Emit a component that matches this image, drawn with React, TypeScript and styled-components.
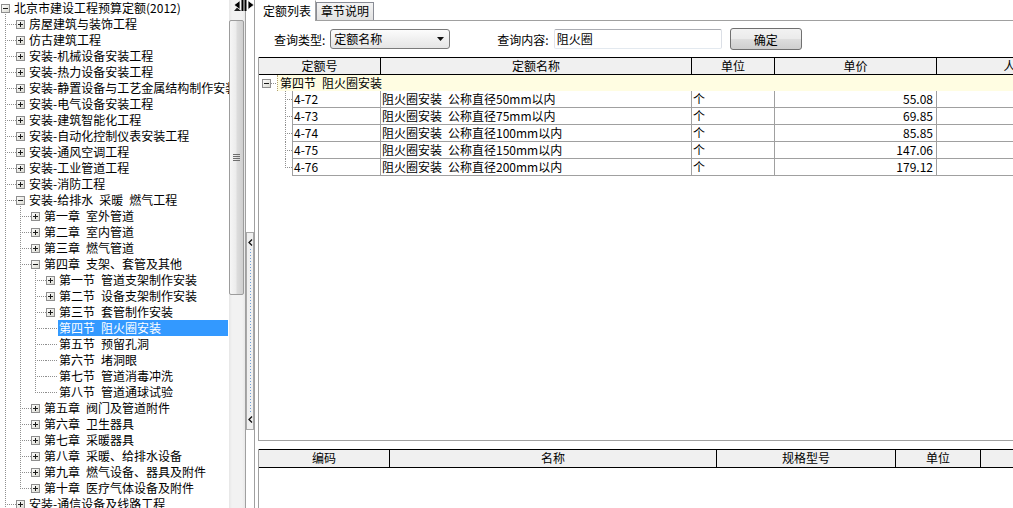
import React from 'react';
import styled, { createGlobalStyle, css } from 'styled-components';

const GlobalStyle = createGlobalStyle`
  *, *::before, *::after { box-sizing: border-box; }
  html, body { margin: 0; padding: 0; background: #fff; }
  body {
    font-family: "Noto Sans CJK SC", "Noto Sans", sans-serif;
    font-size: 12px;
    color: #000;
  }
`;

const DOT = '#8f8f8f';

type Seg = { d: 'v' | 'h'; x: number; y: number; len: number };

const dotBg = (segs: Seg[]) => {
  if (!segs.length) return '';
  const imgs = segs
    .map((s) => `repeating-linear-gradient(${s.d === 'v' ? 'to bottom' : 'to right'}, ${DOT} 0 1px, transparent 1px 2px)`)
    .join(', ');
  const sizes = segs.map((s) => (s.d === 'v' ? `1px ${s.len}px` : `${s.len}px 1px`)).join(', ');
  const pos = segs.map((s) => `${s.x}px ${s.y}px`).join(', ');
  return `background-image: ${imgs}; background-size: ${sizes}; background-position: ${pos}; background-repeat: no-repeat;`;
};

/* ---------- layout ---------- */

const Window = styled.div`
  position: relative;
  display: flex;
  width: 1013px;
  height: 508px;
  overflow: hidden;
  background: #fff;
`;

const TreePane = styled.div`
  flex: none;
  display: flex;
  width: 246px;
  height: 100%;
  border-right: 1px solid #a0a0a0;
`;

const TreeList = styled.div`
  flex: none;
  width: 229px;
  height: 100%;
  overflow: hidden;
`;

const TreeRow = styled.div`
  display: flex;
  height: 16px;
  padding-left: 1px;
`;

const GuideCell = styled.span<{ $segs: Seg[] }>`
  flex: none;
  width: 15px;
  height: 16px;
  ${(p) => dotBg(p.$segs)}
`;

const NodeCell = styled.span<{ $segs: Seg[] }>`
  flex: none;
  display: flex;
  align-items: flex-start;
  width: 12px;
  height: 16px;
  padding-top: 4px;
  ${(p) => dotBg(p.$segs)}
  svg { display: block; }
`;

const NodeLabel = styled.span<{ $sel?: boolean }>`
  flex: 1;
  min-width: 0;
  height: 16px;
  line-height: 16px;
  padding-left: 1px;
  white-space: nowrap;
  overflow: hidden;
  ${(p) =>
    p.$sel &&
    css`
      background: #3399ff;
      color: #fff;
      margin-right: 1px;
    `}
`;

const VScroll = styled.div`
  flex: none;
  width: 16px;
  height: 100%;
  display: flex;
  flex-direction: column;
  background: linear-gradient(to right, #e6e6e6, #f2f2f2 3px, #f2f2f2 13px, #e9e9e9);
`;

const ScrollArrow = styled.div`
  flex: none;
  height: 17px;
  display: flex;
  align-items: center;
  justify-content: center;
`;

const Thumb = styled.div`
  flex: none;
  margin-top: 3px;
  width: 15px;
  height: 275px;
  border: 1px solid #9c9c9c;
  border-radius: 2px;
  background: linear-gradient(to right, #f6f6f6, #ececec 45%, #dcdcdc 55%, #cfcfcf);
  display: flex;
  align-items: center;
  justify-content: center;
`;

const Splitter = styled.div`
  flex: none;
  width: 9px;
  height: 100%;
  border-right: 1px solid #a0a0a0;
  padding-top: 232px;
`;

const SplitHandle = styled.div`
  width: 8px;
  height: 198px;
  border: 1px solid #a8a8a8;
  background: #f0f0f0;
  display: flex;
  flex-direction: column;
  align-items: center;
  padding: 6px 0 6px;
  gap: 3px;
`;

const SplitDots = styled.div`
  flex: 1;
  width: 1px;
  background: repeating-linear-gradient(to bottom, #6f9fd8 0 1px, transparent 1px 3px);
`;

const RightPane = styled.div`
  flex: 1;
  min-width: 0;
  height: 100%;
  display: flex;
  flex-direction: column;
  padding-left: 3px;
`;

const TabBar = styled.div`
  flex: none;
  display: flex;
  align-items: flex-end;
  height: 21px;
  border-bottom: 1px solid #a0a0a0;
`;

const Tab = styled.div<{ $active?: boolean }>`
  flex: none;
  padding: 0 4px;
  white-space: nowrap;
  border: 1px solid #a0a0a0;
  border-bottom: none;
  ${(p) =>
    p.$active
      ? css`
          height: 21px;
          line-height: 19px;
          margin-bottom: -1px;
          background: #fff;
          border-color: #fff #a0a0a0 #fff #fff;
        `
      : css`
          height: 18px;
          line-height: 16px;
          background: linear-gradient(#f4f4f4, #e2e2e2);
          border-color: #898c95;
        `}
`;

const QueryBar = styled.div`
  flex: none;
  height: 36px;
  display: flex;
  align-items: center;
  padding-left: 16px;
`;

const QLabel = styled.span<{ $gap?: number }>`
  margin-left: ${(p) => p.$gap ?? 0}px;
  white-space: nowrap;
`;

const Select = styled.div`
  margin-left: 5px;
  width: 120px;
  height: 20px;
  border: 1px solid #7a7a7a;
  border-radius: 3px;
  background: linear-gradient(#fcfcfc, #f0f0f0 50%, #e5e5e5);
  display: flex;
  align-items: center;
  justify-content: space-between;
  padding: 0 5px 0 3px;
  line-height: 18px;
`;

const TextInput = styled.div`
  margin-left: 5px;
  width: 168px;
  height: 20px;
  border: 1px solid;
  border-color: #abadb3 #dbdfe6 #e3e9ef #e2e3ea;
  border-radius: 2px;
  padding-left: 2px;
  line-height: 18px;
  background: #fff;
`;

const Button = styled.div`
  margin-left: 8px;
  width: 72px;
  height: 22px;
  border: 1px solid #707070;
  border-radius: 3px;
  background: linear-gradient(#f2f2f2 0%, #ebebeb 48%, #dddddd 52%, #cfcfcf 100%);
  display: flex;
  align-items: center;
  justify-content: center;
`;

const TopGrid = styled.div`
  flex: none;
  height: 384px;
  border-left: 1px solid #a0a0a0;
  border-bottom: 1px solid #a0a0a0;
  overflow: hidden;
`;

const BottomGrid = styled.div`
  flex: 1;
  margin-top: 8px;
  border-left: 1px solid #a0a0a0;
  overflow: hidden;
`;

const HeadRow = styled.div<{ $h: number }>`
  display: flex;
  height: ${(p) => p.$h}px;
  margin-left: -1px;
  border: 1px solid #000;
  border-right: none;
  background: #f0f0f0;
`;

const HeadCell = styled.div<{ $w: number }>`
  flex: none;
  width: ${(p) => p.$w}px;
  border-right: 1px solid #000;
  text-align: center;
  line-height: 16px;
  white-space: nowrap;
  overflow: hidden;
`;

const GroupRow = styled.div`
  display: flex;
  height: 16px;
`;

const GroupIndent = styled.span`
  flex: none;
  width: 18px;
  height: 16px;
  padding: 4px 0 0 3px;
  ${dotBg([{ d: 'h', x: 12, y: 8, len: 6 }])}
  svg { display: block; }
`;

const GroupLabel = styled.span`
  flex: 1;
  background: #fffde2;
  border-left: 1px dotted #b0a070;
  padding-left: 2px;
  line-height: 16px;
  white-space: nowrap;
`;

const DataRow = styled.div`
  display: flex;
  height: 17px;
`;

const CodeCell = styled.div`
  flex: none;
  display: flex;
  width: 122px;
`;

const TreeIndent = styled.span<{ $last?: boolean }>`
  flex: none;
  width: 33px;
  height: 17px;
  ${(p) =>
    dotBg([
      { d: 'v', x: 26, y: 0, len: p.$last ? 9 : 17 },
      { d: 'h', x: 26, y: 8, len: 7 },
    ])}
`;

const Cell = styled.div<{ $w?: number; $right?: boolean; $left?: boolean }>`
  flex: ${(p) => (p.$w ? 'none' : '1')};
  width: ${(p) => (p.$w ? `${p.$w}px` : 'auto')};
  height: 17px;
  border-right: 1px solid #a0a0a0;
  border-bottom: 1px solid #a0a0a0;
  ${(p) => p.$left && 'border-left: 1px solid #a0a0a0;'}
  padding: ${(p) => (p.$right ? '0 3px 0 0' : '0 0 0 1px')};
  text-align: ${(p) => (p.$right ? 'right' : 'left')};
  line-height: 16px;
  white-space: nowrap;
  overflow: hidden;
`;

const CursorLayer = styled.svg`
  position: absolute;
  left: 233px;
  top: 0;
`;

/* ---------- icons ---------- */

const ExpandBox = ({ open }: { open: boolean }) => (
  <svg width="9" height="9" viewBox="0 0 9 9">
    <defs>
      <linearGradient id="eb" x1="0" y1="0" x2="1" y2="1">
        <stop offset="0" stopColor="#ffffff" />
        <stop offset="1" stopColor="#d8d8d0" />
      </linearGradient>
    </defs>
    <rect x="0.5" y="0.5" width="8" height="8" fill="url(#eb)" stroke="#8e8e8e" />
    <path d="M2 4.5h5" stroke="#1a1a1a" />
    {!open && <path d="M4.5 2v5" stroke="#1a1a1a" />}
  </svg>
);

const UpArrow = () => (
  <svg width="7" height="4" viewBox="0 0 7 4">
    <path d="M0 4L3.5 0L7 4Z" fill="#222" />
  </svg>
);

const Grip = () => (
  <svg width="7" height="7" viewBox="0 0 7 7">
    <path d="M0 0.5h7M0 2.5h7M0 4.5h7M0 6.5h7" stroke="#6e6e6e" />
  </svg>
);

const Chevron = () => (
  <svg width="5" height="7" viewBox="0 0 5 7">
    <path d="M4 0.5L1 3.5L4 6.5" stroke="#111" fill="none" strokeWidth="1.3" />
  </svg>
);

const DropArrow = () => (
  <svg width="7" height="4" viewBox="0 0 7 4">
    <path d="M0 0H7L3.5 4Z" fill="#111" />
  </svg>
);

const ResizeCursor = () => (
  <CursorLayer width="23" height="11" viewBox="0 0 23 11">
    <path d="M1 5L7 0.5V9.5Z" fill="#000" stroke="#fff" strokeWidth="0.8" />
    <rect x="8.5" y="0" width="2" height="11" fill="#000" />
    <rect x="11.5" y="0" width="2" height="11" fill="#000" />
    <path d="M21 5L15 0.5V9.5Z" fill="#000" stroke="#fff" strokeWidth="0.8" />
  </CursorLayer>
);

/* ---------- data ---------- */

type TNode = { label: string; depth: number; box?: 'plus' | 'minus'; sel?: boolean };

const nodes: TNode[] = [
  { label: '北京市建设工程预算定额(2012)', depth: 0, box: 'minus' },
  { label: '房屋建筑与装饰工程', depth: 1, box: 'plus' },
  { label: '仿古建筑工程', depth: 1, box: 'plus' },
  { label: '安装-机械设备安装工程', depth: 1, box: 'plus' },
  { label: '安装-热力设备安装工程', depth: 1, box: 'plus' },
  { label: '安装-静置设备与工艺金属结构制作安装工程', depth: 1, box: 'plus' },
  { label: '安装-电气设备安装工程', depth: 1, box: 'plus' },
  { label: '安装-建筑智能化工程', depth: 1, box: 'plus' },
  { label: '安装-自动化控制仪表安装工程', depth: 1, box: 'plus' },
  { label: '安装-通风空调工程', depth: 1, box: 'plus' },
  { label: '安装-工业管道工程', depth: 1, box: 'plus' },
  { label: '安装-消防工程', depth: 1, box: 'plus' },
  { label: '安装-给排水 采暖 燃气工程', depth: 1, box: 'minus' },
  { label: '第一章 室外管道', depth: 2, box: 'plus' },
  { label: '第二章 室内管道', depth: 2, box: 'plus' },
  { label: '第三章 燃气管道', depth: 2, box: 'plus' },
  { label: '第四章 支架、套管及其他', depth: 2, box: 'minus' },
  { label: '第一节 管道支架制作安装', depth: 3, box: 'plus' },
  { label: '第二节 设备支架制作安装', depth: 3, box: 'plus' },
  { label: '第三节 套管制作安装', depth: 3, box: 'plus' },
  { label: '第四节 阻火圈安装', depth: 3, sel: true },
  { label: '第五节 预留孔洞', depth: 3 },
  { label: '第六节 堵洞眼', depth: 3 },
  { label: '第七节 管道消毒冲洗', depth: 3 },
  { label: '第八节 管道通球试验', depth: 3 },
  { label: '第五章 阀门及管道附件', depth: 2, box: 'plus' },
  { label: '第六章 卫生器具', depth: 2, box: 'plus' },
  { label: '第七章 采暖器具', depth: 2, box: 'plus' },
  { label: '第八章 采暖、给排水设备', depth: 2, box: 'plus' },
  { label: '第九章 燃气设备、器具及附件', depth: 2, box: 'plus' },
  { label: '第十章 医疗气体设备及附件', depth: 2, box: 'plus' },
  { label: '安装-通信设备及线路工程', depth: 1, box: 'plus' },
];

// list continues below the visible area with more depth-1 items
const depthAt = (j: number) => (j < nodes.length ? nodes[j].depth : 1);

const continues = (i: number, level: number) => {
  for (let j = i + 1; j <= nodes.length; j++) {
    const d = depthAt(j);
    if (d === level) return true;
    if (d < level) return false;
  }
  return false;
};

const sp = (s: string) => s.replace(/ /g, '\u2002');

const TreeItem = ({ n, i }: { n: TNode; i: number }) => {
  const guides: Seg[][] = [];
  for (let k = 0; k < n.depth; k++) {
    if (k < n.depth - 1) {
      guides.push(continues(i, k + 1) ? [{ d: 'v', x: 4, y: 0, len: 16 }] : []);
    } else {
      guides.push([
        { d: 'v', x: 4, y: 0, len: continues(i, n.depth) ? 16 : 8 },
        { d: 'h', x: 4, y: 8, len: 11 },
      ]);
    }
  }
  const nodeSegs: Seg[] = n.box
    ? n.box === 'minus'
      ? [{ d: 'v', x: 4, y: 8, len: 8 }]
      : []
    : [{ d: 'h', x: 0, y: 8, len: 12 }];
  return (
    <TreeRow>
      {guides.map((g, k) => (
        <GuideCell key={k} $segs={g} />
      ))}
      <NodeCell $segs={nodeSegs}>{n.box && <ExpandBox open={n.box === 'minus'} />}</NodeCell>
      <NodeLabel $sel={n.sel}>{sp(n.label)}</NodeLabel>
    </TreeRow>
  );
};

const topCols = [122, 311, 83, 162, 170];
const topHeads = ['定额号', '定额名称', '单位', '单价', '人工费'];
const bottomCols = [131, 327, 179, 85, 200];
const bottomHeads = ['编码', '名称', '规格型号', '单位', ''];

const quotas = [
  ['4-72', '阻火圈安装 公称直径50mm以内', '个', '55.08'],
  ['4-73', '阻火圈安装 公称直径75mm以内', '个', '69.85'],
  ['4-74', '阻火圈安装 公称直径100mm以内', '个', '85.85'],
  ['4-75', '阻火圈安装 公称直径150mm以内', '个', '147.06'],
  ['4-76', '阻火圈安装 公称直径200mm以内', '个', '179.12'],
];

export default function App() {
  return (
    <>
      <GlobalStyle />
      <Window>
        <TreePane>
          <TreeList>
            {nodes.map((n, i) => (
              <TreeItem key={i} n={n} i={i} />
            ))}
          </TreeList>
          <VScroll>
            <ScrollArrow>
              <UpArrow />
            </ScrollArrow>
            <Thumb>
              <Grip />
            </Thumb>
          </VScroll>
        </TreePane>

        <Splitter>
          <SplitHandle>
            <Chevron />
            <SplitDots />
            <Chevron />
          </SplitHandle>
        </Splitter>

        <RightPane>
          <TabBar>
            <Tab $active>定额列表</Tab>
            <Tab>章节说明</Tab>
          </TabBar>

          <QueryBar>
            <QLabel>查询类型:</QLabel>
            <Select>
              <span>定额名称</span>
              <DropArrow />
            </Select>
            <QLabel $gap={47}>查询内容:</QLabel>
            <TextInput>阻火圈</TextInput>
            <Button>确定</Button>
          </QueryBar>

          <TopGrid>
            <HeadRow $h={18}>
              {topHeads.map((h, i) => (
                <HeadCell key={i} $w={topCols[i]}>
                  {h}
                </HeadCell>
              ))}
            </HeadRow>
            <GroupRow>
              <GroupIndent>
                <ExpandBox open />
              </GroupIndent>
              <GroupLabel>{sp('第四节 阻火圈安装')}</GroupLabel>
            </GroupRow>
            {quotas.map((q, i) => (
              <DataRow key={q[0]}>
                <CodeCell>
                  <TreeIndent $last={i === quotas.length - 1} />
                  <Cell $left>{q[0]}</Cell>
                </CodeCell>
                <Cell $w={topCols[1]}>{sp(q[1])}</Cell>
                <Cell $w={topCols[2]}>{q[2]}</Cell>
                <Cell $w={topCols[3]} $right>
                  {q[3]}
                </Cell>
                <Cell $w={topCols[4]} />
              </DataRow>
            ))}
          </TopGrid>

          <BottomGrid>
            <HeadRow $h={19}>
              {bottomHeads.map((h, i) => (
                <HeadCell key={i} $w={bottomCols[i]}>
                  {h}
                </HeadCell>
              ))}
            </HeadRow>
          </BottomGrid>
        </RightPane>

        <ResizeCursor />
      </Window>
    </>
  );
}
